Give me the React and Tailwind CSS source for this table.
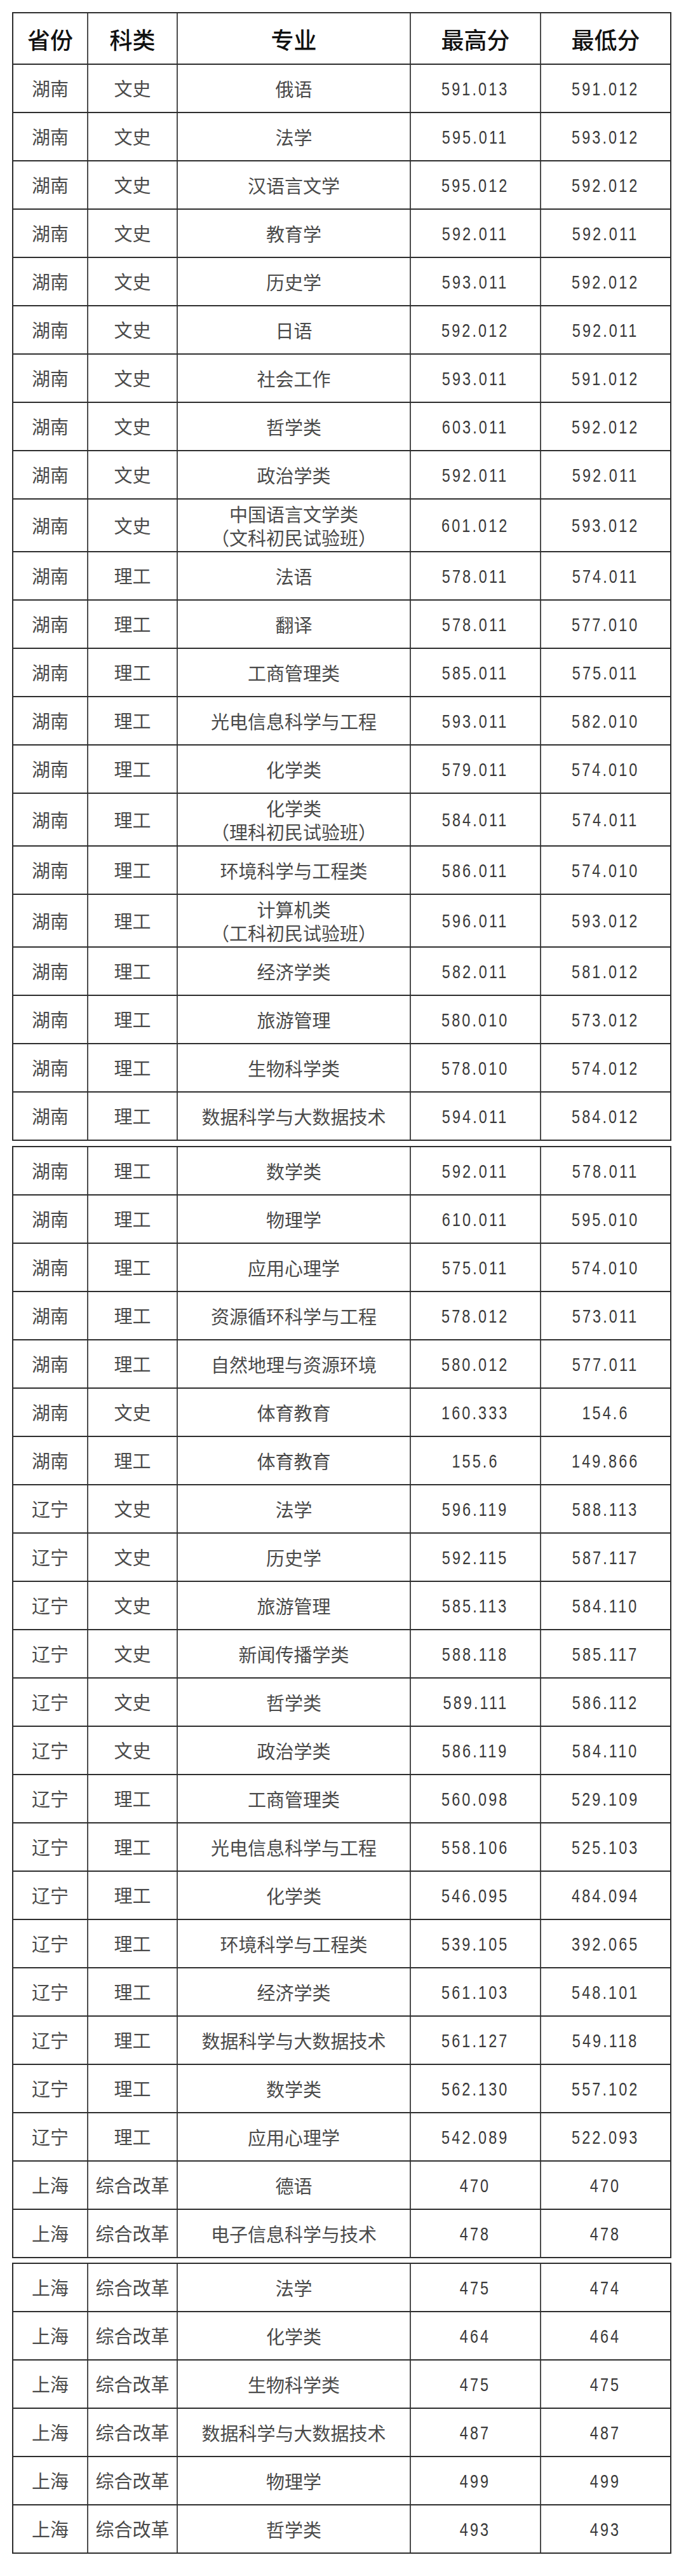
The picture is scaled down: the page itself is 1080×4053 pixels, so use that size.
const part1 = [
    ["湖南", "文史", "俄语", "591.013", "591.012"],
    ["湖南", "文史", "法学", "595.011", "593.012"],
    ["湖南", "文史", "汉语言文学", "595.012", "592.012"],
    ["湖南", "文史", "教育学", "592.011", "592.011"],
    ["湖南", "文史", "历史学", "593.011", "592.012"],
    ["湖南", "文史", "日语", "592.012", "592.011"],
    ["湖南", "文史", "社会工作", "593.011", "591.012"],
    ["湖南", "文史", "哲学类", "603.011", "592.012"],
    ["湖南", "文史", "政治学类", "592.011", "592.011"],
    ["湖南", "文史", "中国语言文学类\n（文科初民试验班）", "601.012", "593.012"],
    ["湖南", "理工", "法语", "578.011", "574.011"],
    ["湖南", "理工", "翻译", "578.011", "577.010"],
    ["湖南", "理工", "工商管理类", "585.011", "575.011"],
    ["湖南", "理工", "光电信息科学与工程", "593.011", "582.010"],
    ["湖南", "理工", "化学类", "579.011", "574.010"],
    ["湖南", "理工", "化学类\n（理科初民试验班）", "584.011", "574.011"],
    ["湖南", "理工", "环境科学与工程类", "586.011", "574.010"],
    ["湖南", "理工", "计算机类\n（工科初民试验班）", "596.011", "593.012"],
    ["湖南", "理工", "经济学类", "582.011", "581.012"],
    ["湖南", "理工", "旅游管理", "580.010", "573.012"],
    ["湖南", "理工", "生物科学类", "578.010", "574.012"],
    ["湖南", "理工", "数据科学与大数据技术", "594.011", "584.012"],
];

const part2 = [
    ["湖南", "理工", "数学类", "592.011", "578.011"],
    ["湖南", "理工", "物理学", "610.011", "595.010"],
    ["湖南", "理工", "应用心理学", "575.011", "574.010"],
    ["湖南", "理工", "资源循环科学与工程", "578.012", "573.011"],
    ["湖南", "理工", "自然地理与资源环境", "580.012", "577.011"],
    ["湖南", "文史", "体育教育", "160.333", "154.6"],
    ["湖南", "理工", "体育教育", "155.6", "149.866"],
    ["辽宁", "文史", "法学", "596.119", "588.113"],
    ["辽宁", "文史", "历史学", "592.115", "587.117"],
    ["辽宁", "文史", "旅游管理", "585.113", "584.110"],
    ["辽宁", "文史", "新闻传播学类", "588.118", "585.117"],
    ["辽宁", "文史", "哲学类", "589.111", "586.112"],
    ["辽宁", "文史", "政治学类", "586.119", "584.110"],
    ["辽宁", "理工", "工商管理类", "560.098", "529.109"],
    ["辽宁", "理工", "光电信息科学与工程", "558.106", "525.103"],
    ["辽宁", "理工", "化学类", "546.095", "484.094"],
    ["辽宁", "理工", "环境科学与工程类", "539.105", "392.065"],
    ["辽宁", "理工", "经济学类", "561.103", "548.101"],
    ["辽宁", "理工", "数据科学与大数据技术", "561.127", "549.118"],
    ["辽宁", "理工", "数学类", "562.130", "557.102"],
    ["辽宁", "理工", "应用心理学", "542.089", "522.093"],
    ["上海", "综合改革", "德语", "470", "470"],
    ["上海", "综合改革", "电子信息科学与技术", "478", "478"],
];

const part3 = [
    ["上海", "综合改革", "法学", "475", "474"],
    ["上海", "综合改革", "化学类", "464", "464"],
    ["上海", "综合改革", "生物科学类", "475", "475"],
    ["上海", "综合改革", "数据科学与大数据技术", "487", "487"],
    ["上海", "综合改革", "物理学", "499", "499"],
    ["上海", "综合改革", "哲学类", "493", "493"],
];

const cell = "flex items-center justify-center text-center border-r-2 border-[#4d4d4d]";

// condensed tall digits, like the song-style numbers in the scan
function Num({ v }) {
    return (
        <span className="inline-block scale-x-[0.78] font-['Liberation_Sans',sans-serif] text-[30px] tracking-[4px] text-[#3a3a3a]">
            {v}
        </span>
    );
}

function Row({ row }) {
    const [prov, kind, major, hi, lo] = row;
    const tall = major.includes("\n");
    return (
        <div
            className={`grid grid-cols-[118px_141px_367px_205px_1fr] border-b-2 border-[#2e2e2e] text-[29px] text-[#4a4a4a] ${
                tall ? "h-[83px]" : "h-[76px]"
            }`}
        >
            <div className={cell}>{prov}</div>
            <div className={cell}>{kind}</div>
            <div className={`${cell} whitespace-pre-line leading-[37px]`}>{major}</div>
            <div className={cell}>
                <Num v={hi} />
            </div>
            <div className="flex items-center justify-center">
                <Num v={lo} />
            </div>
        </div>
    );
}

function Block({ rows, header, className = "" }) {
    return (
        <div className={`ml-[19px] w-[1038px] border-x-2 border-t-2 border-[#2e2e2e] ${className}`}>
            {header && (
                <div className="grid h-[81px] grid-cols-[118px_141px_367px_205px_1fr] border-b-2 border-[#2e2e2e] text-[36px] font-medium text-[#111]">
                    <div className={cell}>省份</div>
                    <div className={cell}>科类</div>
                    <div className={cell}>专业</div>
                    <div className={cell}>最高分</div>
                    <div className="flex items-center justify-center">最低分</div>
                </div>
            )}
            {rows.map((r, i) => (
                <Row key={i} row={r} />
            ))}
        </div>
    );
}

export default function App() {
    return (
        <main className="min-h-[4053px] bg-white pt-[19px] font-['Noto_Sans_CJK_SC',sans-serif]">
            <Block rows={part1} header />
            <Block rows={part2} className="mt-[8px]" />
            <Block rows={part3} className="mt-[7px]" />
        </main>
    );
}
